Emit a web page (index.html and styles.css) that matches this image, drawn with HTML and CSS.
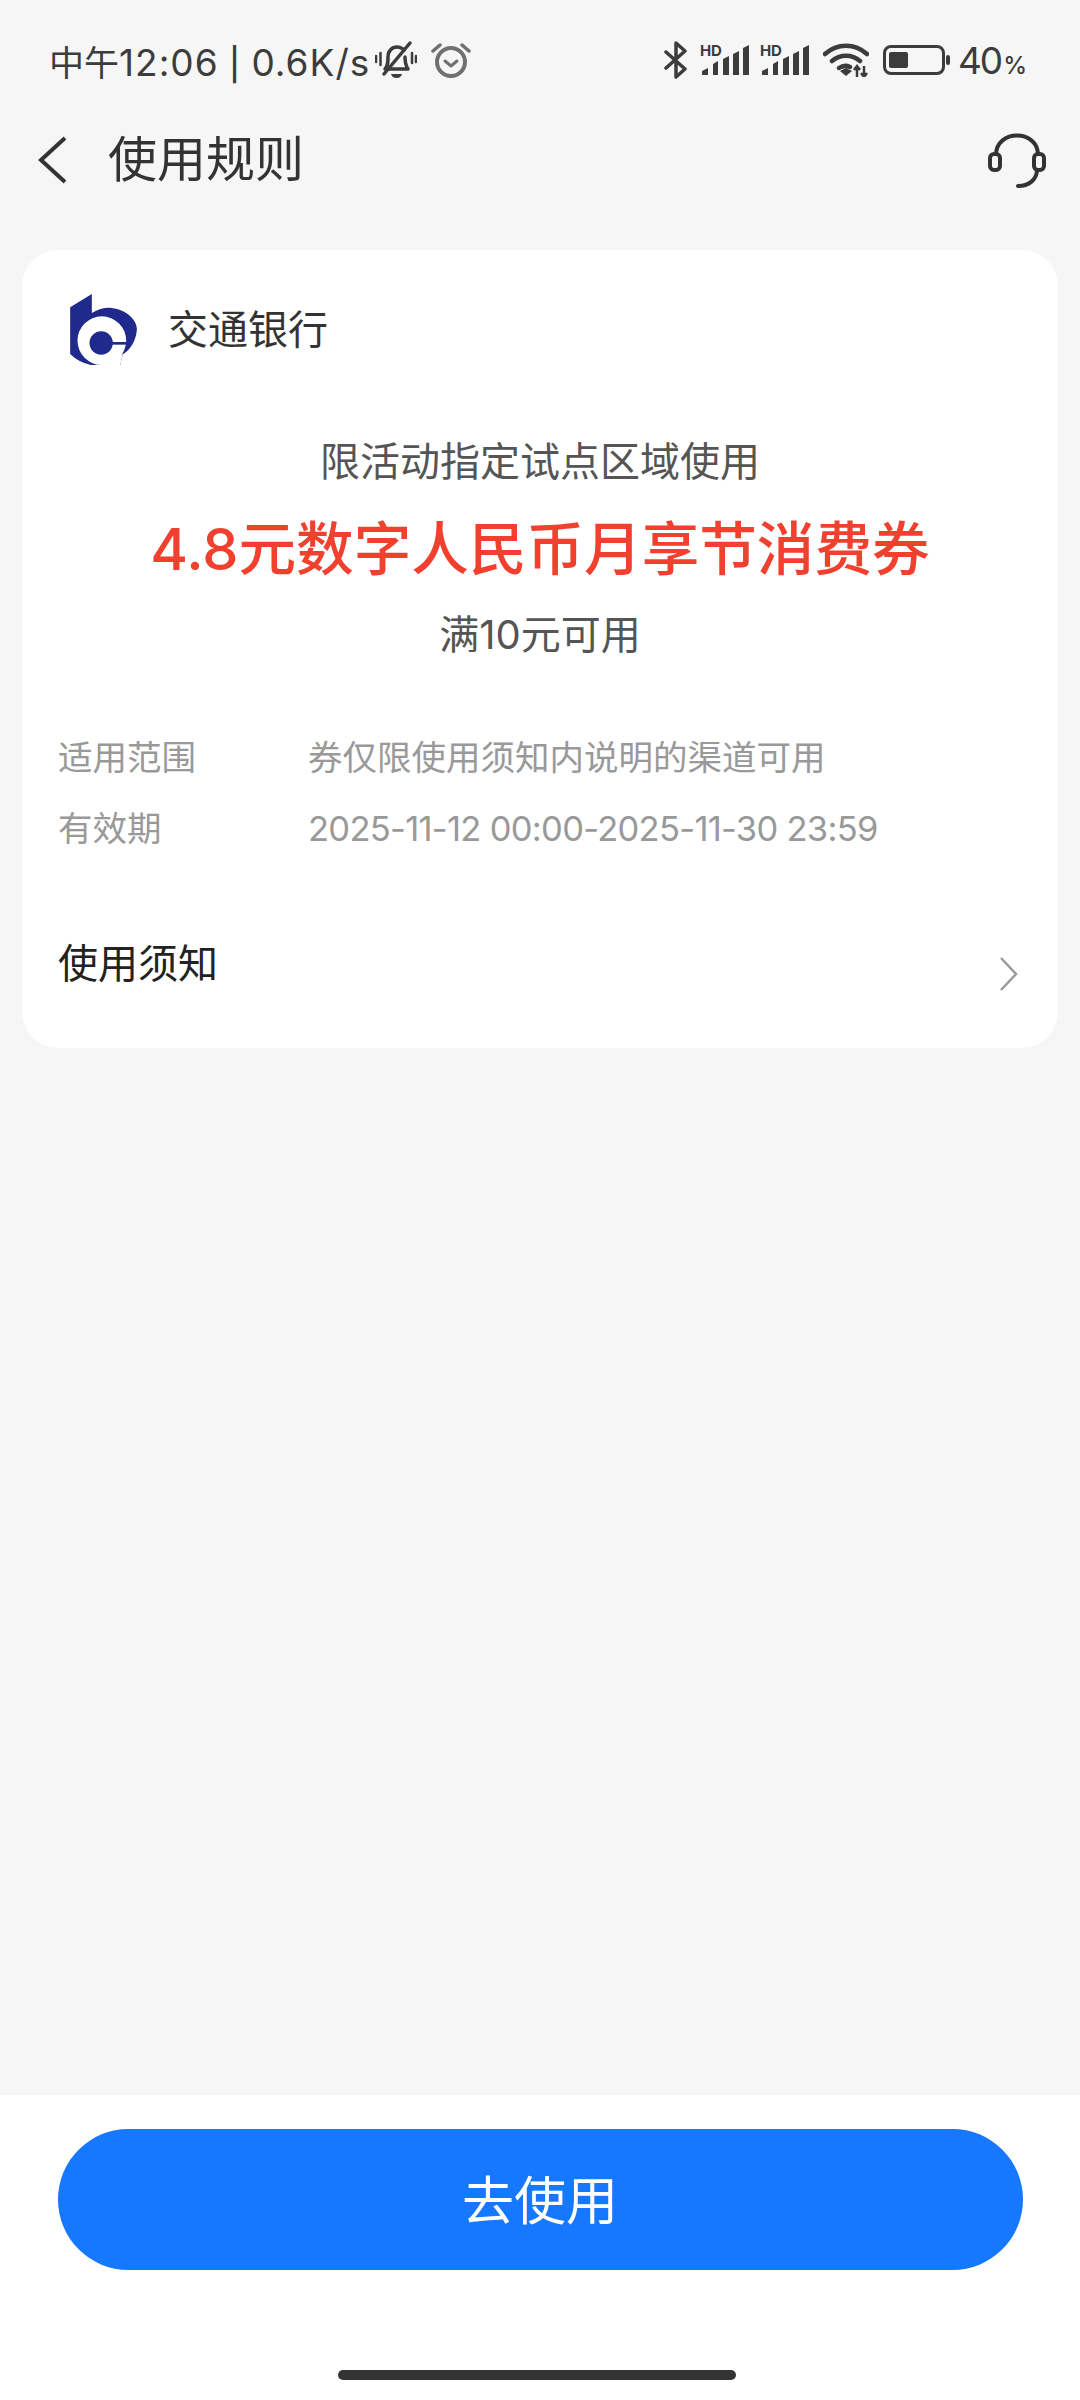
FILE: index.html
```html
<!DOCTYPE html>
<html lang="zh-CN">
<head>
    <meta charset="UTF-8">
    <meta name="viewport" content="width=device-width, initial-scale=1.0">
    <title>使用规则</title>
    <link rel="stylesheet" href="styles.css">
</head>
<body>
    <div class="page">
        <!-- Status bar -->
        <div class="status-bar">
            <div class="status-left">
                <span class="status-text"><span class="status-noon">中午</span>12:06 <span class="status-sep">|</span> 0.6K/s</span>
                <svg class="icon-bell" viewBox="0 0 42 38" width="42" height="38">
                    <path d="M10 28c3-3 3-7 3-12 0-6 4-10 9-10 3 0 5 1 7 3M30 16c0 5 1 9 3 12H14" fill="none" stroke="#3c3c3c" stroke-width="3.5" stroke-linecap="round" stroke-linejoin="round"/>
                    <path d="M9 33L35 2" stroke="#3c3c3c" stroke-width="3.5" stroke-linecap="round"/>
                    <path d="M16 33h11c-1 3-3 4-5.500 4s-4.500-1-5.500-4z" fill="#3c3c3c"/>
                    <path d="M1 15v6M5.500 12v12M37 12v10M41 15v6" stroke="#3c3c3c" stroke-width="2.500" stroke-linecap="round"/>
                </svg>
                <svg class="icon-alarm" viewBox="0 0 40 36" width="40" height="36">
                    <circle cx="20" cy="20" r="14" fill="none" stroke="#707070" stroke-width="4"/>
                    <path d="M14 19l6 5 6-5" fill="none" stroke="#707070" stroke-width="3" stroke-linecap="round" stroke-linejoin="round"/>
                    <path d="M2 9l7-6M38 9l-7-6" stroke="#707070" stroke-width="3.500" stroke-linecap="round"/>
                </svg>
            </div>
            <div class="status-right">
                <svg viewBox="0 0 24 38" width="24" height="38">
                    <path d="M2 11l19 17-9 8V2l9 8L2 27" fill="none" stroke="#3c3c3c" stroke-width="3.500" stroke-linecap="round" stroke-linejoin="round"/>
                </svg>
                <div class="signal">
                    <span class="signal-hd">HD</span>
                    <svg viewBox="0 0 47 30" width="47" height="30">
                        <path d="M0 30v-4l6-3v7zM11 30V19l5-3v14zM21 30V14l6-3v19zM31 30V9l6-3v24zM41 30V3l6-3v30z" fill="#3c3c3c"/>
                    </svg>
                </div>
                <div class="signal">
                    <span class="signal-hd">HD</span>
                    <svg viewBox="0 0 47 30" width="47" height="30">
                        <path d="M0 30v-4l6-3v7zM11 30V19l5-3v14zM21 30V14l6-3v19zM31 30V9l6-3v24zM41 30V3l6-3v30z" fill="#3c3c3c"/>
                    </svg>
                </div>
                <svg class="icon-wifi" viewBox="0 0 46 34" width="46" height="34">
                    <path d="M2 11c12-11 30-11 42 0M9 18c8-7 20-7 28 0M16 25c3-2 7-3 11-1" fill="none" stroke="#3c3c3c" stroke-width="4.500" stroke-linecap="round"/>
                    <path d="M17 28l6-3 6 3-6 5z" fill="#3c3c3c"/>
                    <path d="M34 23v11M41 23v11M31 27l3-4 3 4M38 30l3 4 3-4" fill="none" stroke="#3c3c3c" stroke-width="2.500"/>
                </svg>
                <div class="battery">
                    <div class="battery-body"><div class="battery-level"></div></div>
                    <div class="battery-cap"></div>
                </div>
                <span class="battery-text">40<small>%</small></span>
            </div>
        </div>

        <!-- Title bar -->
        <div class="title-bar">
            <svg class="back" viewBox="0 0 32 50" width="32" height="50">
                <path d="M28 3L4 25l24 22" fill="none" stroke="#333" stroke-width="4"/>
            </svg>
            <h1>使用规则</h1>
            <svg class="headset" viewBox="0 0 60 58" width="60" height="58">
                <path d="M9 24C9 -2 51 -2 51 24" fill="none" stroke="#333" stroke-width="4"/>
                <rect x="3" y="23" width="10" height="16" rx="4" fill="none" stroke="#333" stroke-width="4"/>
                <rect x="47" y="23" width="10" height="16" rx="4" fill="none" stroke="#333" stroke-width="4"/>
                <path d="M50 40c-1 9-8 15-19 15" fill="none" stroke="#333" stroke-width="4" stroke-linecap="round"/>
            </svg>
        </div>

        <!-- Card -->
        <div class="card">
            <div class="bank">
                <svg class="bank-logo" viewBox="150 165 200 213" width="67" height="71">
                    <path d="M215 165V222C235 210 255 205 275 207C320 212 352 245 350 272C348 305 330 332 308 346L300 378H212Q175 370 150 345V205Z" fill="#1f2a8c"/>
                    <circle cx="245" cy="305" r="73" fill="#fff"/>
                    <path d="M300 346L308 346L300 378H212L240 378Z" fill="#fff"/>
                    <circle cx="243" cy="312" r="35" fill="#1f2a8c"/>
                    <path d="M270 309H322V317H270Z" fill="#1f2a8c"/>
                </svg>
                <span class="bank-name">交通银行</span>
            </div>
            <div class="coupon">
                <p class="coupon-scope">限活动指定试点区域使用</p>
                <p class="coupon-name">4.8元数字人民币月享节消费券</p>
                <p class="coupon-limit">满10元可用</p>
            </div>
            <div class="details">
                <div class="detail-row">
                    <span class="detail-label">适用范围</span>
                    <span class="detail-value">券仅限使用须知内说明的渠道可用</span>
                </div>
                <div class="detail-row">
                    <span class="detail-label">有效期</span>
                    <span class="detail-value detail-date">2025-11-12 00:00-2025-11-30 23:59</span>
                </div>
            </div>
            <div class="notice">
                <span class="notice-title">使用须知</span>
                <svg class="chevron" viewBox="0 0 22 36" width="22" height="36">
                    <path d="M3 2l15 16L3 34" fill="none" stroke="#999" stroke-width="2.500"/>
                </svg>
            </div>
        </div>

        <!-- Bottom button -->
        <div class="footer">
            <button class="btn-use">去使用</button>
            <div class="home-bar"></div>
        </div>
    </div>
</body>
</html>
```

FILE: styles.css
```css
/* Page */
body {
    margin: 0;
    background-color: #f6f6f6;
    font-family: 'Inter', 'Noto Sans CJK SC', sans-serif;
    color: #333;
}

.page {
    display: flex;
    flex-direction: column;
    width: 1080px;
    height: 2400px;
    overflow: hidden;
}

/* Status bar */
.status-bar {
    display: flex;
    justify-content: space-between;
    align-items: center;
    height: 40px;
    margin-top: 40px;
    padding: 0 53px 0 49px;
}

.status-left,
.status-right {
    display: flex;
    align-items: center;
}

.status-text {
    font-size: 37px;
    letter-spacing: 1px;
    color: #3c3c3c;
    white-space: nowrap;
}

.status-noon {
    font-size: 35px;
    letter-spacing: 0;
}

.status-sep {
    margin: 0 -1px;
    font-size: 32px;
    font-weight: 500;
}

.icon-bell {
    margin-left: 5px;
}

.icon-alarm {
    margin-left: 14px;
}

.signal {
    position: relative;
    display: flex;
    align-items: flex-end;
    justify-content: flex-end;
    width: 49px;
    height: 30px;
    margin-left: 12px;
}

.signal + .signal {
    margin-left: 11px;
}

.signal-hd {
    position: absolute;
    left: 0;
    top: -1px;
    font-size: 15px;
    line-height: 13px;
    font-weight: 700;
    color: #3c3c3c;
}

.icon-wifi {
    margin-left: 14px;
}

.battery {
    display: flex;
    align-items: center;
    gap: 1px;
    margin-left: 14px;
}

.battery-body {
    box-sizing: border-box;
    width: 62px;
    height: 30px;
    padding: 4px 3px;
    border: 3px solid #3c3c3c;
    border-radius: 8px;
}

.battery-level {
    width: 19px;
    height: 100%;
    background-color: #3c3c3c;
    border-radius: 2px;
}

.battery-cap {
    width: 4px;
    height: 10px;
    background-color: #3c3c3c;
    border-radius: 2px;
}

.battery-text {
    margin-left: 8px;
    font-size: 37px;
    letter-spacing: -2px;
    color: #3c3c3c;
}

.battery-text small {
    margin-left: 2px;
    font-size: 24px;
    font-weight: 500;
    letter-spacing: 0;
}

/* Title bar */
.title-bar {
    display: flex;
    align-items: center;
    height: 60px;
    margin-top: 50px;
    padding: 0 33px 0 37px;
}

.back {
    margin-right: 39px;
}

.title-bar h1 {
    flex: 1;
    margin: 0 0 10px;
    font-size: 49px;
    font-weight: 400;
    color: #333;
}

/* Card */
.card {
    display: flex;
    flex-direction: column;
    height: 798px;
    margin: 60px 22px 0;
    padding: 44px 36px 0;
    box-sizing: border-box;
    background-color: #fff;
    border-radius: 36px;
}

.bank {
    display: flex;
    align-items: center;
    padding-left: 12px;
}

.bank-name {
    margin-left: 31px;
    margin-bottom: 6px;
    font-size: 40px;
    color: #333;
}

.coupon {
    margin-top: 71px;
    text-align: center;
}

.coupon-scope {
    margin: 0;
    font-size: 40px;
    line-height: 52px;
    color: #555;
}

.coupon-name {
    margin: 24px 0 0;
    font-size: 57.6px;
    line-height: 74px;
    font-weight: 500;
    color: #f2402f;
}

.coupon-limit {
    margin: 23px 0 0;
    font-size: 40px;
    line-height: 52px;
    color: #555;
}

.details {
    display: flex;
    flex-direction: column;
    gap: 23px;
    margin-top: 73px;
}

.detail-row {
    display: flex;
    font-size: 34.5px;
    line-height: 48px;
    color: #999;
}

.detail-label {
    width: 250px;
}

.detail-date {
    letter-spacing: -0.7px;
}

.notice {
    display: flex;
    justify-content: space-between;
    align-items: center;
    margin-top: 77px;
}

.notice-title {
    font-size: 40px;
    color: #222;
}

.chevron {
    margin-top: 26px;
    margin-right: 2px;
}

/* Footer */
.footer {
    display: flex;
    flex-direction: column;
    align-items: center;
    flex: 1;
    margin-top: 1047px;
    background-color: #fff;
}

.btn-use {
    width: 965px;
    height: 141px;
    margin-top: 34px;
    padding: 0 0 4px;
    border: none;
    border-radius: 71px;
    background-color: #1677ff;
    color: #fff;
    font-family: inherit;
    font-size: 52px;
}

.home-bar {
    width: 398px;
    height: 10px;
    margin-top: 100px;
    margin-right: 6px;
    background-color: #333;
    border-radius: 5px;
}
```
